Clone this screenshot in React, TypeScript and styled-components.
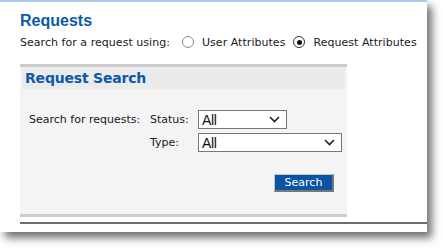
import React from 'react';
import styled, { createGlobalStyle } from 'styled-components';

const GlobalStyle = createGlobalStyle`
  html, body {
    margin: 0;
    padding: 0;
    background: #ffffff;
  }
  body {
    font-family: "DejaVu Sans", Verdana, sans-serif;
    color: #1a1a1a;
  }
`;

const Canvas = styled.div`
  width: 443px;
  height: 248px;
  overflow: hidden;
`;

const Page = styled.div`
  width: 427px;
  height: 232px;
  box-sizing: border-box;
  background: #ffffff;
  border-top: 2px solid #a9c9ea;
  padding: 9px 0 0 20px;
  box-shadow: 5px 6px 8px rgba(0, 0, 0, 0.55);
  display: flex;
  flex-direction: column;
`;

const Title = styled.h1`
  margin: 0;
  font-family: "Liberation Sans", Arial, sans-serif;
  font-weight: bold;
  font-size: 16px;
  line-height: 19px;
  color: #0b5aa7;
`;

const ModeRow = styled.div`
  display: flex;
  align-items: center;
  margin-top: 4px;
  height: 16px;
  font-size: 11px;
  letter-spacing: 0.04px;
  white-space: nowrap;
`;

const ModeLabel = styled.span`
  margin-right: 12px;
`;

const RadioOption = styled.label`
  display: flex;
  align-items: center;
  margin-right: 8px;
`;

const RadioCircle = styled.span<{ $checked?: boolean }>`
  width: 10px;
  height: 10px;
  border-radius: 50%;
  border: 1px solid ${(p) => (p.$checked ? '#333' : '#8a8a8a')};
  background: #fff;
  margin-right: 8px;
  position: relative;
  &::after {
    content: '';
    display: ${(p) => (p.$checked ? 'block' : 'none')};
    position: absolute;
    left: 2.5px;
    top: 2.5px;
    width: 5px;
    height: 5px;
    border-radius: 50%;
    background: #111;
  }
`;

const Panel = styled.div`
  margin-top: 14px;
  width: 327px;
  background: #f4f4f4;
  border-top: 3px solid #cbcbcb;
  border-bottom: 3px solid #cbcbcb;
  display: flex;
  flex-direction: column;
`;

const PanelHeader = styled.div`
  height: 22px;
  margin: 0 2px;
  background: #ebebeb;
  padding-left: 3px;
  display: flex;
  align-items: center;
  font-weight: bold;
  font-size: 14px;
  letter-spacing: -0.2px;
  color: #0b5aa7;
`;

const PanelBody = styled.div`
  padding: 21px 5px 22px 9px;
  display: flex;
  flex-direction: column;
`;

const Form = styled.div`
  display: grid;
  grid-template-columns: 121px 48px 1fr;
  row-gap: 4px;
  align-items: center;
  font-size: 11px;
  white-space: nowrap;
`;

const SelectBox = styled.div<{ $width: number }>`
  width: ${(p) => p.$width}px;
  height: 19px;
  box-sizing: border-box;
  border: 1px solid #777;
  background: #fff;
  display: flex;
  align-items: center;
  justify-content: space-between;
  padding: 0 6px 0 3px;
  font-family: "Liberation Sans", Arial, sans-serif;
  font-size: 14px;
  letter-spacing: -0.3px;
  color: #111;
`;

const Chevron = () => (
  <svg width="11" height="7" viewBox="0 0 11 7">
    <path d="M1 1 L5.5 5.5 L10 1" fill="none" stroke="#222" strokeWidth="1.6" />
  </svg>
);

const ButtonRow = styled.div`
  display: flex;
  justify-content: flex-end;
  padding-right: 8px;
  margin-top: 22px;
`;

const SearchButton = styled.button`
  width: 60px;
  height: 18px;
  box-sizing: border-box;
  padding: 0;
  background: #0a54a4;
  color: #fff;
  font-family: "DejaVu Sans", Verdana, sans-serif;
  font-size: 11px;
  border-style: solid;
  border-width: 1px 2px 2px 1px;
  border-color: #c6c6c6 #777 #777 #c6c6c6;
`;

const Divider = styled.div`
  margin-top: 5px;
  height: 2px;
  background: #6e6e6e;
`;

export default function App() {
  return (
    <Canvas>
      <GlobalStyle />
      <Page>
        <Title>Requests</Title>
        <ModeRow>
          <ModeLabel>Search for a request using:</ModeLabel>
          <RadioOption>
            <RadioCircle />
            User Attributes
          </RadioOption>
          <RadioOption>
            <RadioCircle $checked />
            Request Attributes
          </RadioOption>
        </ModeRow>
        <Panel>
          <PanelHeader>Request Search</PanelHeader>
          <PanelBody>
            <Form>
              <span>Search for requests:</span>
              <span>Status:</span>
              <SelectBox $width={89}>
                All
                <Chevron />
              </SelectBox>
              <span />
              <span>Type:</span>
              <SelectBox $width={144}>
                All
                <Chevron />
              </SelectBox>
            </Form>
            <ButtonRow>
              <SearchButton>Search</SearchButton>
            </ButtonRow>
          </PanelBody>
        </Panel>
        <Divider />
      </Page>
    </Canvas>
  );
}
